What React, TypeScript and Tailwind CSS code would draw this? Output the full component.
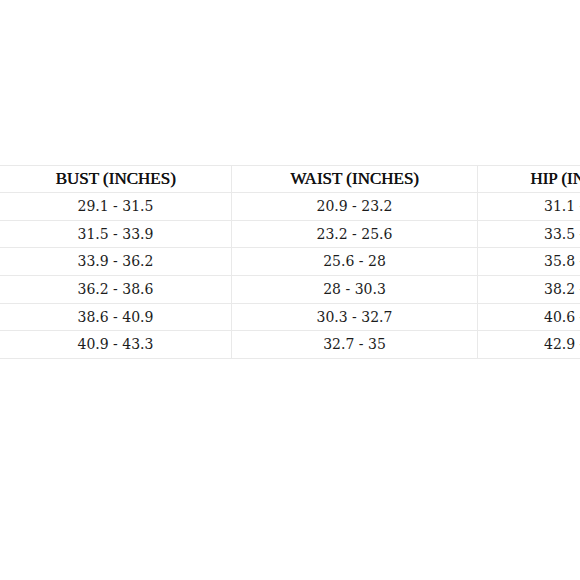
import React from "react";

const rows = [
  ["29.1 - 31.5", "20.9 - 23.2", "31.1 - 33.5"],
  ["31.5 - 33.9", "23.2 - 25.6", "33.5 - 35.8"],
  ["33.9 - 36.2", "25.6 - 28", "35.8 - 38.2"],
  ["36.2 - 38.6", "28 - 30.3", "38.2 - 40.6"],
  ["38.6 - 40.9", "30.3 - 32.7", "40.6 - 42.9"],
  ["40.9 - 43.3", "32.7 - 35", "42.9 - 45.3"],
];

export default function App() {
  return (
    <div className="w-[580px] h-[580px] bg-white overflow-hidden pt-[165px]" style={{ fontFamily: '"DejaVu Serif", serif' }}>
      <div className="grid grid-cols-[232px_246px_208px] w-[686px] border-t border-[#e9e9e9] text-[#1c1c1c]">
        {["BUST (INCHES)", "WAIST (INCHES)", "HIP (INCHES)"].map((h, i) => (
          <div key={h} className={`h-[27px] flex items-center justify-center border-b border-[#e9e9e9] text-[17px] text-[#111111] [text-shadow:0.5px_0_0_#111111] font-['Liberation_Serif',serif] whitespace-nowrap ${i < 2 ? "border-r" : ""}`}>
            {h}
          </div>
        ))}
        {rows.map((r, ri) =>
          r.map((c, ci) => (
            <div key={ri + "-" + ci} className={`h-[27.7px] flex items-center justify-center border-b border-[#e9e9e9] text-[14px] whitespace-nowrap ${ci < 2 ? "border-r" : ""}`}>
              {c}
            </div>
          ))
        )}
      </div>
    </div>
  );
}
